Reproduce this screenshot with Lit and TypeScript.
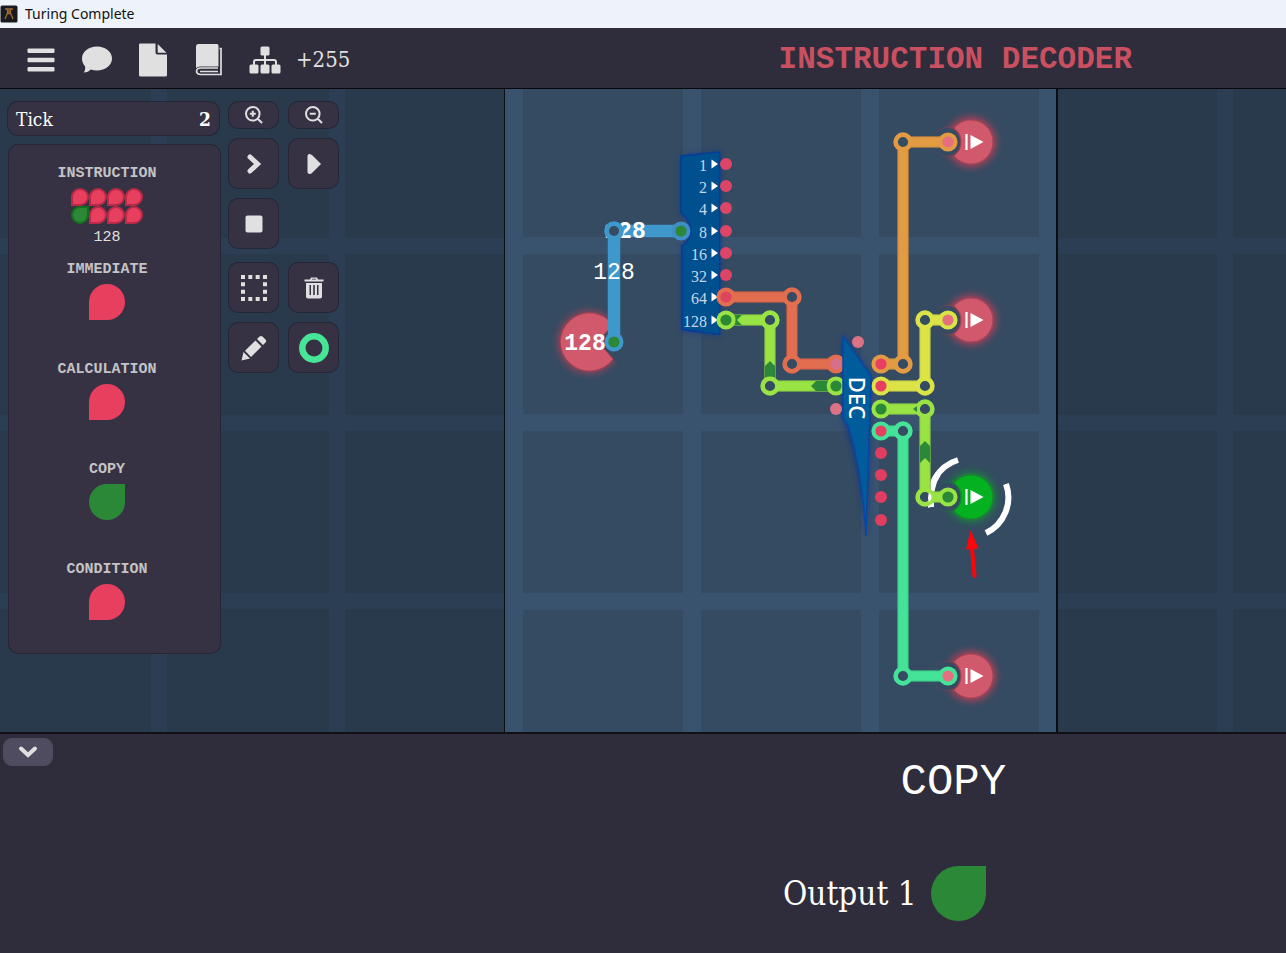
import { LitElement, html, svg, css } from "lit";
import { customElement } from "lit/decorators.js";

type Point = [number, number];

interface Wire {
  color: string;
  edge: string;
  points: Point[];
  startPin: string;
  endPin: string;
}

const ON = "#2b8837";
const OFF = "#e83f60";
const OFF_SOFT = "#e4707f";
const BOARD = "#354b62";

const WIRES: Wire[] = [
  { color: "#e29b43", edge: "#b9813f", points: [[881, 364], [903, 364], [903, 142], [948, 142]], startPin: OFF, endPin: OFF_SOFT },
  { color: "#dce346", edge: "#a9b548", points: [[881, 386], [925, 386], [925, 320], [948, 320]], startPin: OFF, endPin: OFF_SOFT },
  { color: "#44e397", edge: "#3db283", points: [[881, 431], [903, 431], [903, 676], [948, 676]], startPin: OFF, endPin: OFF_SOFT },
  { color: "#e36e4f", edge: "#b75a49", points: [[726, 297], [792, 297], [792, 364], [836, 364]], startPin: "#dc4560", endPin: "#d5708a" },
  { color: "#99e444", edge: "#79b648", points: [[726, 320], [770, 320], [770, 386], [836, 386]], startPin: ON, endPin: ON },
  { color: "#99e444", edge: "#79b648", points: [[881, 409], [925, 409], [925, 497], [948, 497]], startPin: ON, endPin: ON },
];

const OUTPUTS = [
  { y: 142, on: false },
  { y: 320, on: false },
  { y: 497, on: true },
  { y: 676, on: false },
];

const BITS = ["1", "2", "4", "8", "16", "32", "64", "128"];
const BIT_Y = [164, 186, 208, 231, 253, 275, 297, 320];

const SIGNALS = [
  { name: "IMMEDIATE", on: false },
  { name: "CALCULATION", on: false },
  { name: "COPY", on: true },
  { name: "CONDITION", on: false },
];

@customElement("circuit-board")
export class CircuitBoard extends LitElement {
  static styles = css`
    :host { display: block; overflow: hidden; background: #283a4b; }
    .canvas { display: block; width: 100%; height: 100%; }
    .bit { font: 16px "Liberation Serif", serif; fill: #c3d7ea; text-anchor: end; }
    .value { font: 23px "Liberation Mono", monospace; fill: #fff; text-anchor: middle; }
    .strong { font-weight: bold; }
    .chip { font: 500 22px "Noto Sans", sans-serif; fill: #fff; text-anchor: middle; }
  `;

  private line(points: Point[]) {
    return points.map((p) => p.join(",")).join(" ");
  }

  private wire(w: Wire) {
    const first = w.points[0];
    const last = w.points[w.points.length - 1];
    return svg`
      <polyline points=${this.line(w.points)} fill="none" stroke=${w.edge} stroke-width="11.5"></polyline>
      <polyline points=${this.line(w.points)} fill="none" stroke=${w.color} stroke-width="9.5"></polyline>
      ${w.points.slice(1, -1).map(([x, y]) => svg`
        <circle cx=${x} cy=${y} r="7.4" fill=${BOARD} stroke=${w.color} stroke-width="4.6"></circle>`)}
      <circle cx=${first[0]} cy=${first[1]} r="9.6" fill=${w.color}></circle>
      <circle cx=${first[0]} cy=${first[1]} r="5.6" fill=${w.startPin}></circle>
      <circle cx=${last[0]} cy=${last[1]} r="9.6" fill=${w.color}></circle>
      <circle cx=${last[0]} cy=${last[1]} r="5.6" fill=${w.endPin}></circle>`;
  }

  private output(y: number, on: boolean) {
    const glow = on ? "#0fae22" : "#ff3a50";
    return svg`
      <circle cx="971" cy=${y} r="24" fill=${glow} opacity="0.75" filter="url(#glow)"></circle>
      <circle cx="947" cy=${y} r="15" fill=${on ? "#2b5e50" : "#6b4358"}></circle>
      <circle cx="946" cy=${y} r="14" fill=${BOARD}></circle>
      <path d="M954 ${y - 14} A22 22 0 1 1 954 ${y + 14} C960 ${y + 9} 961 ${y + 5} 961 ${y} S960 ${y - 9} 954 ${y - 14} Z"
        fill=${on ? "#04b121" : "#d05a6b"} stroke=${on ? "#138a26" : "#a94456"}></path>
      <path d="M966.5 ${y - 8} V${y + 8}" stroke="#fff" stroke-width="2.2"></path>
      <path d="M970.5 ${y - 7} L983.5 ${y} L970.5 ${y + 7} Z" fill="#fff"></path>`;
  }

  render() {
    return html`
      <svg class="canvas" viewBox="0 89 1286 643" preserveAspectRatio="xMidYMid slice" role="img" aria-label="Circuit">
        <defs>
          <filter id="glow" x="-60%" y="-60%" width="220%" height="220%"><feGaussianBlur stdDeviation="4.5"></feGaussianBlur></filter>
          <filter id="halo" x="-40%" y="-20%" width="180%" height="140%"><feGaussianBlur stdDeviation="3"></feGaussianBlur></filter>
        </defs>
        <rect x="0" y="89" width="1286" height="643" fill="#283a4b"></rect>
        ${[238, 415, 593].map((y) => svg`<rect x="0" y=${y} width="1286" height="16" fill="#2b3e54"></rect>`)}
        ${[151, 329, 1217].map((x) => svg`<rect x=${x} y="89" width="16" height="643" fill="#2b3e54"></rect>`)}
        <rect x="504" y="89" width="553" height="643" fill=${BOARD}></rect>
        ${[237, 414, 593].map((y) => svg`<rect x="505" y=${y} width="551" height="17" fill="#39526d"></rect>`)}
        ${[505, 683, 861, 1039].map((x) => svg`<rect x=${x} y="89" width="18" height="643" fill="#39526d"></rect>`)}
        <rect x="504" y="89" width="1" height="643" fill="#0b0f14"></rect>
        <rect x="1056" y="89" width="2" height="643" fill="#0b0f14"></rect>

        <circle cx="589" cy="342" r="30" fill="#ff3a50" opacity="0.65" filter="url(#glow)"></circle>
        <path d="M626 312 L602 337 V347 L626 372 Z" fill=${BOARD}></path>
        <path d="M613 325 A29 29 0 1 0 613 359 L604 349 V334 Z" fill="#d05a6b" stroke="#b54354"></path>
        <polyline points="614,342 614,231 681,231" fill="none" stroke="#3f98cc" stroke-width="12.5"></polyline>
        <text class="value strong" x="625" y="238">128</text>
        <circle cx="614" cy="231" r="7.4" fill=${BOARD} stroke="#3f98cc" stroke-width="4.8"></circle>
        <text class="value" x="614" y="279">128</text>
        <text class="value strong" x="585" y="350">128</text>
        <circle cx="614" cy="342" r="9.5" fill="#3f98cc"></circle>
        <circle cx="614" cy="342" r="5.6" fill=${ON}></circle>

        <path d="M681 156 L720 152 V335 L682 330 V246 Q690 240 690 231 Q690 221 681 213 Z" fill="#0a2f9a" opacity="0.65" filter="url(#halo)"></path>
        <path d="M681 156 L719.500 152 V334.500 L682 329.500 V246 Q691 240 691 231 Q691 221 681 213 Z" fill="#00508f" stroke="#053d9b" stroke-width="1.500"></path>
        <circle cx="681" cy="231" r="9.500" fill="#3f8fc4"></circle>
        <circle cx="681" cy="231" r="5.600" fill=${ON}></circle>
        ${BITS.map((b, i) => svg`
          <text class="bit" x="707" y=${BIT_Y[i] + 7}>${b}</text>
          <path d="M711.500 ${BIT_Y[i] - 4.5} L718 ${BIT_Y[i]} L711.500 ${BIT_Y[i] + 4.5} Z" fill="#fff"></path>
          <circle cx="726" cy=${BIT_Y[i]} r="6" fill="#dc4566"></circle>`)}

        <path d="M958 460 A39.500 39.500 0 0 0 931 507" fill="none" stroke="#fff" stroke-width="6"></path>
        <path d="M1006 484 A39.500 39.500 0 0 1 986 533" fill="none" stroke="#fff" stroke-width="6"></path>

        <path d="M843 336 L871 376 L869 440 L866 536 C864 496 856 448 843 418 Z" fill="#0a2f9a" opacity="0.8" filter="url(#halo)"></path>
        ${OUTPUTS.map((o) => this.output(o.y, o.on))}
        <path d="M938 474 Q930 485 931 507" fill="none" stroke="#fff" stroke-width="6"></path>
        ${WIRES.map((w) => this.wire(w))}

        <path d="M734.500 315 H742 L737 320 L742 325 H734.500 Q736.500 320 734.500 315 Z" fill=${ON}></path>
        <path d="M770 361 L775 366 V377.500 Q770 375.500 765 377.500 V366 Z" fill=${ON}></path>
        <path d="M811 386 L816 381 H828 Q825.500 386 828 391 H816 Z" fill=${ON}></path>
        <path d="M913 409 L917 406 V412 Z" fill=${ON}></path>
        <path d="M925 441 L930 446 V463 L925 458 L920 463 V446 Z" fill=${ON}></path>
        <path d="M929 493 A5.200 5.200 0 0 1 929 502 Q927 498 929 493 Z" fill="#fff"></path>

        <path d="M843 336 L871 376 L869 440 L866 536 C864 496 856 448 848 426 L843 418 Z" fill="#015c9b" stroke="#0746a2" stroke-width="1.500"></path>
        <text class="chip" transform="translate(849 398) rotate(90)">DEC</text>
        ${[[858, 342], [836, 409]].map(([x, y]) => svg`<circle cx=${x} cy=${y} r="6" fill="#dc7385"></circle>`)}
        ${[453, 475, 497, 520].map((y) => svg`<circle cx="881" cy=${y} r="6" fill="#e03e60"></circle>`)}

        <path d="M974.500 576 L972 548" stroke="#fd0509" stroke-width="4" stroke-linecap="round"></path>
        <path d="M970.500 530 L978.500 548.500 L966 549.500 Z" fill="#fd0509"></path>
      </svg>`;
  }
}

@customElement("app-root")
export class AppRoot extends LitElement {
  static styles = css`
    :host {
      display: flex;
      flex-direction: column;
      min-height: 100vh;
      background: #2f2c3b;
      color: #fff;
      font-family: "Roboto Slab", "DejaVu Serif Condensed", "DejaVu Serif", serif;
    }
    * { box-sizing: border-box; }
    h1, h2, p { margin: 0; font-weight: normal; }
    button { border: 0; padding: 0; margin: 0; background: none; color: #e0e0e0; font: inherit; display: grid; place-items: center; cursor: pointer; }
    svg { display: block; fill: currentColor; }

    .titlebar { display: flex; align-items: center; gap: 7px; height: 28px; background: #eef3fa; color: #111; font: 14px/20px "Noto Sans", sans-serif; }
    .header { display: grid; grid-template-columns: minmax(0, 17fr) minmax(0, 18fr); align-items: center; height: 61px; padding-top: 3px; border-bottom: 1px solid #08080c; }
    .toolbar { display: flex; align-items: center; gap: 16px; padding-left: 21px; }
    .tool { width: 40px; height: 40px; }
    .score { color: #e0e0e0; font-size: 22px; line-height: 28px; margin-left: -5px; padding-top: 1px; }
    .level { font: bold 31px/40px "Liberation Mono", monospace; color: #c95061; text-align: center; white-space: nowrap; }

    .stage { flex: 1; display: grid; grid-template: minmax(0, 1fr) / minmax(0, 1fr); min-height: 643px; }
    .board, .overlay { grid-area: 1 / 1; }
    .board { height: 100%; min-height: 0; }
    .overlay { z-index: 1; display: flex; align-items: flex-start; gap: 8px; padding: 13px 8px; justify-self: start; }
    .side { display: flex; flex-direction: column; gap: 10px; width: 213px; }
    .card { background: #363243; border-radius: 9px; box-shadow: 0 0 0 1px #262637; }
    .tick { display: flex; justify-content: space-between; align-items: center; height: 33px; margin-right: 2px; padding: 0 8px; font-size: 19px; border-radius: 10px; }
    .count { font-weight: bold; }
    .signals { margin: 0 1px; padding: 21px 15px 34px 0; height: 508px; }
    .signal { display: flex; flex-direction: column; align-items: center; gap: 6px; height: 100px; font: bold 15px/16px "Liberation Mono", monospace; color: #c4c3c5; }
    .wide { height: 96px; }
    .plain { font-weight: normal; color: #e0e0e0; }
    .byte { display: grid; grid-template-columns: repeat(4, 18px); }
    .drop { width: 36px; height: 36px; background: #e83f5f; border-radius: 50% 50% 50% 0; }
    .drop.on { background: #2b8837; border-radius: 50% 0 50% 50%; }
    .byte .drop { width: 18px; height: 18px; border: 2px solid #b92a47; }
    .byte .drop.on { border-color: #14701c; }
    .drop.large { width: 55px; height: 55px; }

    .controls { display: flex; flex-direction: column; gap: 15px; }
    .group { display: grid; grid-template-columns: 49px 49px; gap: 11px; }
    .control { height: 49px; border-radius: 9px; background: #363243; box-shadow: 0 0 0 1px #262637; }
    .short { height: 26px; }

    .footer { min-height: 221px; border-top: 2px solid #101016; display: grid; grid-template-columns: minmax(0, 17fr) minmax(0, 18fr); }
    .collapse { width: 50px; height: 28px; margin: 4px 3px; background: #504c5f; border-radius: 9px; }
    .detail { display: flex; flex-direction: column; align-items: center; gap: 58px; padding: 22px 4px 32px 0; }
    .heading { font: 44px/52px "Liberation Mono", monospace; }
    .result { display: flex; align-items: center; gap: 14px; padding-right: 138px; font-size: 33px; line-height: 48px; white-space: nowrap; }
  `;

  render() {
    return html`
      <div class="titlebar">
        <svg width="18" height="18" viewBox="0 0 18 18" aria-hidden="true">
          <rect x="0.500" y="0.500" width="17" height="17" rx="1.500" fill="#191a1f"></rect>
          <path d="M5 4H13M7.500 4.500V8L5 14M10.500 4.500V8L13 14M7 8.500H11M9 5V9" fill="none" stroke="#a36b2c" stroke-width="1.300"></path>
        </svg>
        <span>Turing Complete</span>
      </div>

      <header class="header">
        <nav class="toolbar" aria-label="Main">
          <button class="tool" aria-label="Menu">
            <svg width="28" height="24" viewBox="0 0 28 24"><rect x="0.500" y="0.500" width="27" height="4.500" rx="1"></rect><rect x="0.500" y="9.700" width="27" height="4.500" rx="1"></rect><rect x="0.500" y="19" width="27" height="4.500" rx="1"></rect></svg>
          </button>
          <button class="tool" aria-label="Chat">
            <svg width="32" height="28" viewBox="0 0 32 28"><path d="M16 0.500C24.400 0.500 31 5.800 31 12.500S24.400 24.500 16 24.500C13.800 24.500 11.600 24.100 9.700 23.400C8 25 5.800 26.500 2.800 26.500C3.900 25.200 4.500 22.500 4 20.300C2 18.200 1 15.400 1 12.500C1 5.800 7.600 0.500 16 0.500Z"></path></svg>
          </button>
          <button class="tool" aria-label="New file">
            <svg width="30" height="34" viewBox="0 0 30 34"><path d="M2 0.500H17.500V9.500Q17.500 11.500 19.500 11.500H29V32Q29 33.500 27.500 33.500H2.500Q1 33.500 1 32V1.500Q1 0.500 2 0.500ZM19.700 1L28.500 9.700H19.700Z"></path></svg>
          </button>
          <button class="tool" aria-label="Manual">
            <svg width="28" height="34" viewBox="0 0 28 34"><path d="M3.500 1H22Q23.500 1 23.500 2.500V23.500H5Q3 23.500 1 25V3.500Q1 1 3.500 1Z"></path><path d="M24.500 5.500H26V31.500H6Q1.600 31.500 1.600 28Q1.600 25 6 25H23M23 28.500H5" fill="none" stroke="currentColor" stroke-width="1.700"></path></svg>
          </button>
          <button class="tool" aria-label="Hierarchy">
            <svg width="32" height="28" viewBox="0 0 32 28"><rect x="11.500" y="0.500" width="9" height="9" rx="1.500"></rect><rect x="0.500" y="18.500" width="9" height="9" rx="1.500"></rect><rect x="11.500" y="18.500" width="9" height="9" rx="1.500"></rect><rect x="22.500" y="18.500" width="9" height="9" rx="1.500"></rect><path d="M16 8V20M5 20V16Q5 14 7 14H25Q27 14 27 16V20" fill="none" stroke="currentColor" stroke-width="2"></path></svg>
          </button>
          <span class="score">+255</span>
        </nav>
        <h1 class="level">INSTRUCTION DECODER</h1>
      </header>

      <main class="stage">
        <circuit-board class="board"></circuit-board>
        <div class="overlay">
          <aside class="side">
            <div class="card tick"><span>Tick</span><span class="count">2</span></div>
            <div class="card signals">
              <div class="signal wide">
                <span>INSTRUCTION</span>
                <div class="byte">
                  ${[0, 1, 2, 3, 4, 5, 6, 7].map((i) => html`<span class="drop ${i === 4 ? "on" : ""}"></span>`)}
                </div>
                <span class="plain">128</span>
              </div>
              ${SIGNALS.map((s) => html`
                <div class="signal"><span>${s.name}</span><span class="drop ${s.on ? "on" : ""}"></span></div>`)}
            </div>
          </aside>
          <div class="controls">
            <div class="group">
              <button class="control short" aria-label="Zoom in">
                <svg width="18" height="18" viewBox="0 0 18 18"><path d="M12.500 12.500L17 17M7.800 4.800V10.800M4.800 7.800H10.800M14.600 7.800A6.800 6.800 0 1 1 1 7.800A6.800 6.800 0 0 1 14.600 7.800Z" fill="none" stroke="currentColor" stroke-width="2"></path></svg>
              </button>
              <button class="control short" aria-label="Zoom out">
                <svg width="18" height="18" viewBox="0 0 18 18"><path d="M12.500 12.500L17 17M4.800 7.800H10.800M14.600 7.800A6.800 6.800 0 1 1 1 7.800A6.800 6.800 0 0 1 14.600 7.800Z" fill="none" stroke="currentColor" stroke-width="2"></path></svg>
              </button>
              <button class="control" aria-label="Step">
                <svg width="16" height="22" viewBox="0 0 16 22"><path d="M4 4L11.500 11L4 18" fill="none" stroke="currentColor" stroke-width="5" stroke-linecap="round" stroke-linejoin="miter"></path></svg>
              </button>
              <button class="control" aria-label="Run">
                <svg width="16" height="22" viewBox="0 0 16 22"><path d="M1.500 3Q1.500 1 3.500 1Q5 1 6.500 2.500L15 11L6.500 19.500Q5 21 3.500 21Q1.500 21 1.500 19Z"></path></svg>
              </button>
              <button class="control" aria-label="Stop">
                <svg width="18" height="18" viewBox="0 0 18 18"><rect x="0.500" y="0.500" width="17" height="17" rx="2"></rect></svg>
              </button>
            </div>
            <div class="group">
              <button class="control" aria-label="Select area">
                <svg width="26" height="26" viewBox="0 0 26 26"><path d="M0 2H26M0 24H26" stroke="currentColor" stroke-width="4" stroke-dasharray="4 3.330"></path><path d="M2 7.330V24M24 7.330V24" stroke="currentColor" stroke-width="4" stroke-dasharray="4 3.330"></path></svg>
              </button>
              <button class="control" aria-label="Delete">
                <svg width="20" height="22" viewBox="0 0 20 22"><path d="M0.500 2.500H6L7 0.500H13L14 2.500H19.500V4.500H0.500ZM7.700 2.500H12.300L11.800 1.800H8.200ZM2 6H18V19.500Q18 21.500 16 21.500H4Q2 21.500 2 19.500ZM5.500 8V18H7V8ZM9.200 8V18H10.800V8ZM13 8V18H14.500V8Z" fill-rule="evenodd"></path></svg>
              </button>
              <button class="control" aria-label="Edit">
                <svg width="26" height="26" viewBox="0 0 26 26"><path d="M0.500 25.500L2.500 17L9 23.500ZM4 15.800L14.500 5.500L20.500 11.500L10 22ZM16 4L18.500 1.500Q20 0.300 21.500 1.500L24.500 4.500Q26 6 24.500 7.500L22 10Z"></path></svg>
              </button>
              <button class="control" aria-label="Wire colour">
                <svg width="30" height="30" viewBox="0 0 30 30"><circle cx="15" cy="15" r="11.700" fill="none" stroke="#47e598" stroke-width="6.500"></circle></svg>
              </button>
            </div>
          </div>
        </div>
      </main>

      <footer class="footer">
        <button class="collapse" aria-label="Collapse panel">
          <svg width="20" height="14" viewBox="0 0 20 14"><path d="M3 3.500L10 10L17 3.500" fill="none" stroke="currentColor" stroke-width="4" stroke-linecap="round"></path></svg>
        </button>
        <section class="detail">
          <h2 class="heading">COPY</h2>
          <p class="result"><span>Output 1</span><span class="drop on large"></span></p>
        </section>
      </footer>`;
  }
}
